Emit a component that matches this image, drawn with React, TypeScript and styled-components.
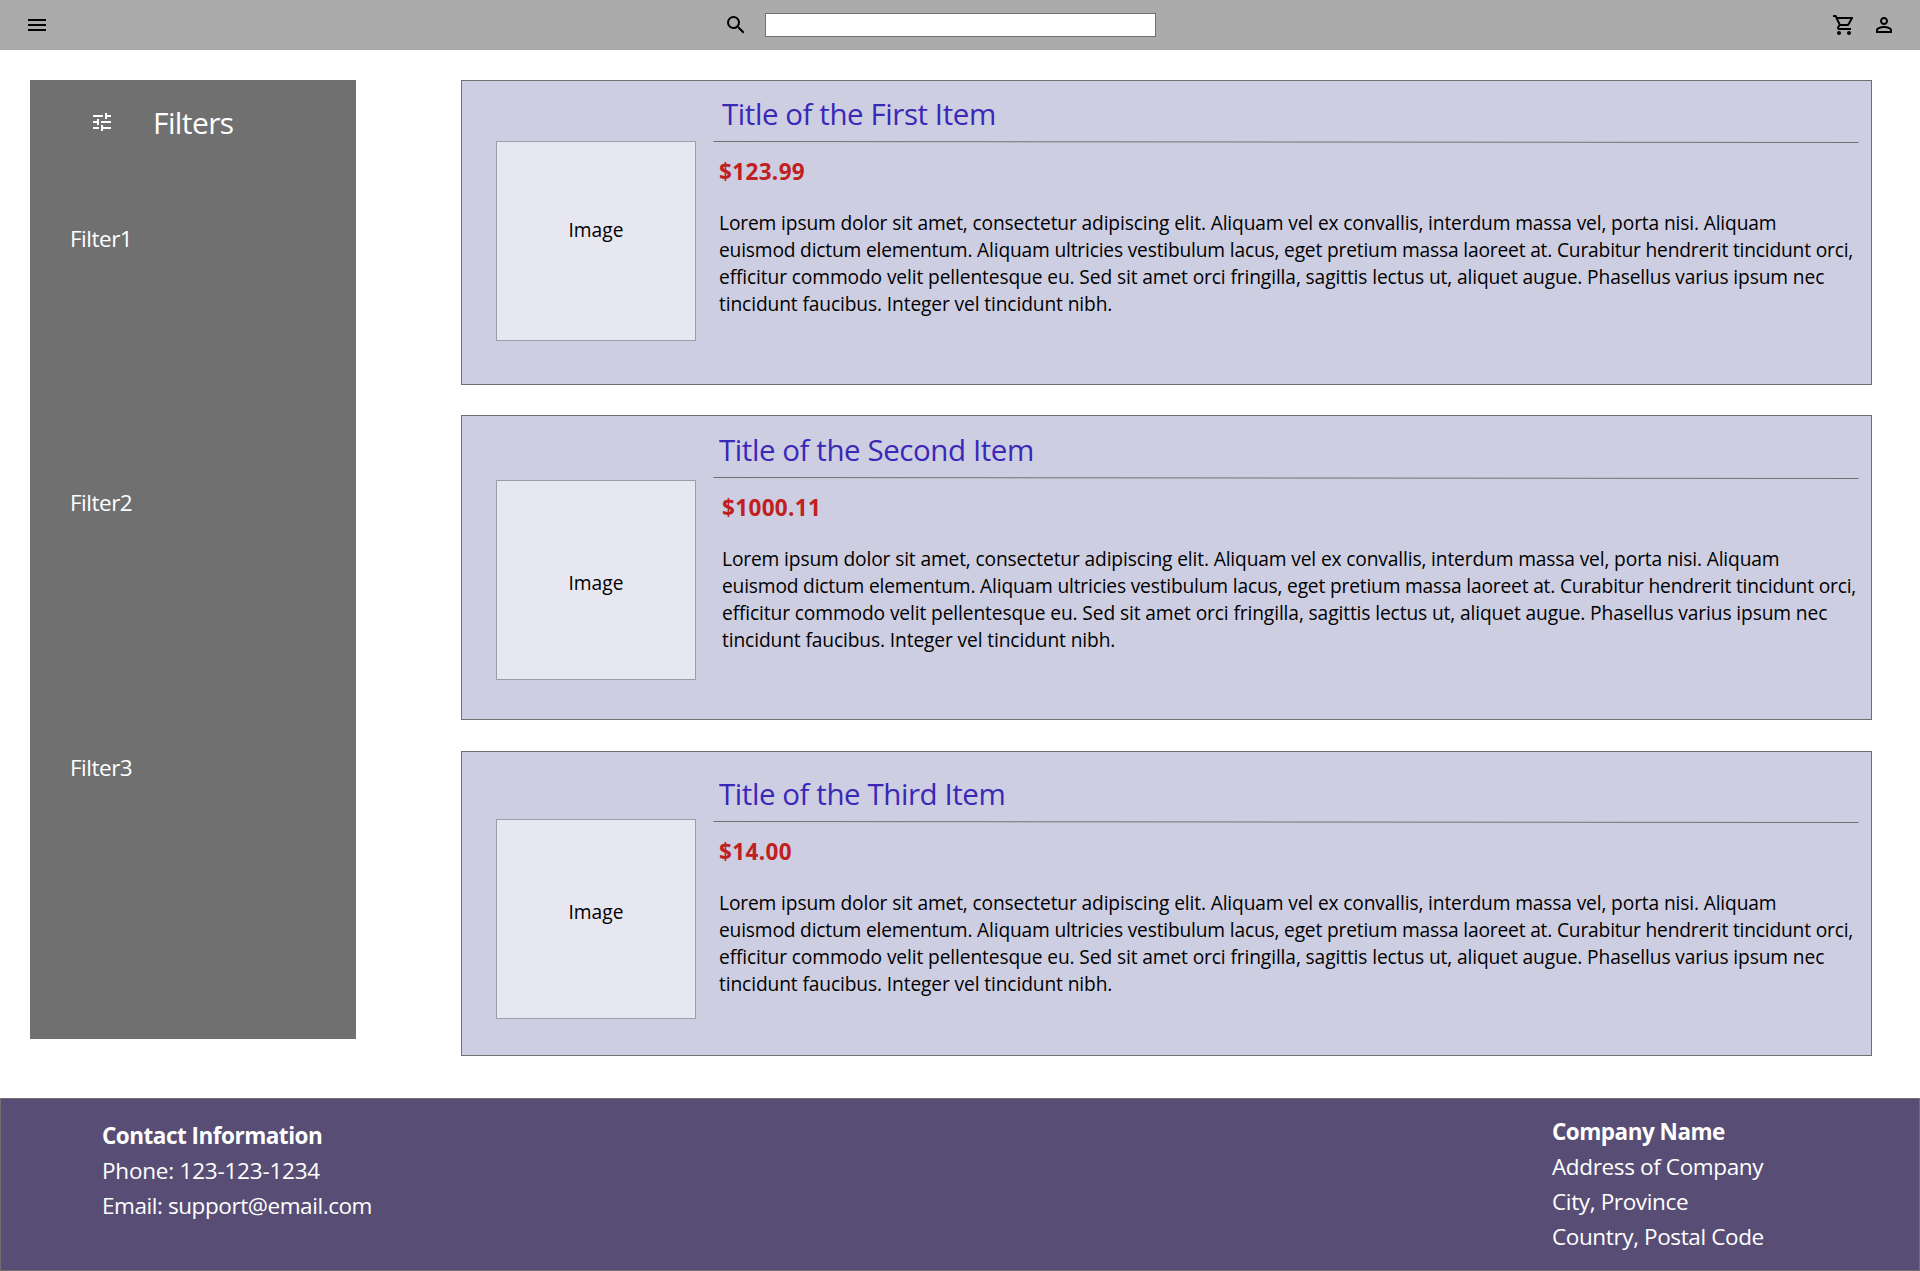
import React from "react";
import styled, { createGlobalStyle } from "styled-components";

const GlobalStyle = createGlobalStyle`
  *, *::before, *::after { box-sizing: border-box; }
  body {
    margin: 0;
    background: #fff;
    color: #000;
    font-family: "Open Sans", "Noto Sans", sans-serif;
  }
  h1, h2, h3, p, ul { margin: 0; padding: 0; font-weight: 400; }
`;

const Page = styled.div`
  display: flex;
  flex-direction: column;
  width: 1920px;
  height: 1271px;
  overflow: hidden;
`;

const TopBar = styled.header`
  display: grid;
  grid-template-columns: 724px 1fr auto;
  align-items: center;
  height: 50px;
  padding: 0 24px 0 0;
  background: #ababab;
`;

const MenuSlot = styled.div`
  display: flex;
  padding-left: 25px;
`;

const Search = styled.div`
  display: flex;
  align-items: center;
  gap: 17px;
`;

const SearchInput = styled.input`
  width: 391px;
  height: 24px;
  padding: 0 6px;
  border: 1px solid #707070;
  background: #fff;
  font: inherit;
  font-size: 15px;
  outline: none;
`;

const Actions = styled.div`
  display: flex;
  gap: 16px;
`;

const Icon = styled.svg`
  display: block;
  flex: none;
  width: 24px;
  height: 24px;
  fill: currentColor;
`;

const Main = styled.main`
  display: flex;
  align-items: flex-start;
  justify-content: space-between;
  height: 1048px;
  padding: 30px 48px 0 30px;
`;

const Sidebar = styled.aside`
  width: 326px;
  height: 959px;
  padding-top: 22px;
  background: #707070;
  color: #fff;
`;

const SidebarHeader = styled.div`
  display: flex;
  align-items: center;
  gap: 39px;
  height: 40px;
  padding-left: 60px;
`;

const SidebarTitle = styled.h2`
  padding-top: 1px;
  font-size: 30px;
  line-height: 40px;
  letter-spacing: -0.6px;
`;

const FilterList = styled.ul`
  display: flex;
  flex-direction: column;
  gap: 232.4px;
  padding: 81px 0 0 40px;
  list-style: none;
`;

const FilterItem = styled.li`
  font-size: 22.5px;
  line-height: 32px;
  letter-spacing: -0.5px;
`;

const Items = styled.section`
  display: flex;
  flex-direction: column;
  gap: 30px;
`;

const Card = styled.article<{ $gapAfter?: number }>`
  display: flex;
  align-items: flex-start;
  width: 1411px;
  height: 305px;
  margin-bottom: ${(p) => p.$gapAfter ?? 0}px;
  padding-left: 34px;
  border: 1px solid #707070;
  background: #cecee2;
`;

const Thumb = styled.div<{ $top: number; $labelTop: number }>`
  width: 200px;
  height: 200px;
  margin-top: ${(p) => p.$top}px;
  padding-top: ${(p) => p.$labelTop}px;
  border: 1px solid #9e9eaa;
  background: #e7e7f1;
  font-size: 19.2px;
  line-height: 28px;
  letter-spacing: 0;
  text-align: center;
`;

const Details = styled.div<{ $top: number }>`
  width: 1146px;
  margin-left: 17px;
  padding-top: ${(p) => p.$top}px;
`;

const ItemTitle = styled.h3<{ $indent: number }>`
  padding: 1px 0 0 ${(p) => p.$indent}px;
  color: #3a28b7;
  font-size: 29.5px;
  line-height: 40px;
  letter-spacing: -0.43px;
`;

const Rule = styled.svg`
  display: block;
  width: 1146px;
  height: 2px;
  margin-top: 7px;
`;

const Price = styled.p<{ $indent: number }>`
  margin-top: 13px;
  padding-left: ${(p) => p.$indent}px;
  color: #c02020;
  font-size: 22.5px;
  font-weight: 700;
  line-height: 32px;
  letter-spacing: 0.35px;
`;

const Description = styled.p<{ $indent: number }>`
  margin-top: 21px;
  padding-left: ${(p) => p.$indent}px;
  font-size: 19.2px;
  line-height: 27px;
  white-space: nowrap;
`;

const Line = styled.span<{ $tracking: number }>`
  display: block;
  letter-spacing: ${(p) => p.$tracking}px;
`;

const Footer = styled.footer`
  display: flex;
  justify-content: space-between;
  height: 173px;
  padding: 0 144px 0 101px;
  border: 1px solid #707070;
  background: #584e75;
  color: #fff;
`;

const FooterBlock = styled.address<{ $top: number; $width: number }>`
  width: ${(p) => p.$width}px;
  padding-top: ${(p) => p.$top}px;
  font-size: 22.5px;
  font-style: normal;
  line-height: 35px;
  white-space: nowrap;
`;

const FooterHeading = styled.h2`
  font-size: 22.5px;
  font-weight: 700;
  line-height: 35px;
  letter-spacing: -0.5px;
`;

const LOREM = [
  { text: "Lorem ipsum dolor sit amet, consectetur adipiscing elit. Aliquam vel ex convallis, interdum massa vel, porta nisi. Aliquam", tracking: -0.14 },
  { text: "euismod dictum elementum. Aliquam ultricies vestibulum lacus, eget pretium massa laoreet at. Curabitur hendrerit tincidunt orci,", tracking: -0.18 },
  { text: "efficitur commodo velit pellentesque eu. Sed sit amet orci fringilla, sagittis lectus ut, aliquet augue. Phasellus varius ipsum nec", tracking: -0.12 },
  { text: "tincidunt faucibus. Integer vel tincidunt nibh.", tracking: -0.12 },
];

const FILTERS = ["Filter1", "Filter2", "Filter3"];

const ITEMS = [
  { title: "Title of the First Item", price: "$123.99", top: 12, titleIndent: 9, textIndent: 6, thumbTop: 60, labelTop: 74, gapAfter: 0 },
  { title: "Title of the Second Item", price: "$1000.11", top: 13, titleIndent: 6, textIndent: 9, thumbTop: 64, labelTop: 88, gapAfter: 1 },
  { title: "Title of the Third Item", price: "$14.00", top: 21, titleIndent: 6, textIndent: 6, thumbTop: 67, labelTop: 78, gapAfter: 0 },
];

export default function App() {
  return (
    <>
      <GlobalStyle />
      <Page>
        <TopBar>
          <MenuSlot>
            <Icon viewBox="0 0 24 24">
              <path d="M3 18h18v-2H3v2zm0-5h18v-2H3v2zm0-7v2h18V6H3z" />
            </Icon>
          </MenuSlot>
          <Search>
            <Icon viewBox="0 0 24 24">
              <path d="M15.5 14h-.79l-.28-.27A6.471 6.471 0 0 0 16 9.5 6.5 6.5 0 1 0 9.5 16c1.61 0 3.09-.59 4.23-1.57l.27.28v.79l5 4.99L20.49 19l-4.99-5zm-6 0C7.01 14 5 11.99 5 9.5S7.01 5 9.5 5 14 7.01 14 9.5 11.99 14 9.5 14z" />
            </Icon>
            <SearchInput aria-label="Search" />
          </Search>
          <Actions>
            <Icon viewBox="0 0 24 24">
              <path d="M15.55 13c.75 0 1.41-.41 1.75-1.03l3.58-6.49A.996.996 0 0 0 20.01 4H5.21l-.94-2H1v2h2l3.6 7.59-1.35 2.44C4.52 15.37 5.48 17 7 17h12v-2H7l1.1-2h7.45zM6.16 6h12.15l-2.76 5H8.53L6.16 6zM7 18c-1.1 0-1.99.9-1.99 2S5.9 22 7 22s2-.9 2-2-.9-2-2-2zm10 0c-1.1 0-1.99.9-1.99 2s.89 2 1.99 2 2-.9 2-2-.9-2-2-2z" />
            </Icon>
            <Icon viewBox="0 0 24 24">
              <path d="M12 5.9a2.1 2.1 0 1 1 0 4.2 2.1 2.1 0 0 1 0-4.2m0 9c2.97 0 6.1 1.46 6.1 2.1v1.1H5.9V17c0-.64 3.13-2.1 6.1-2.1M12 4C9.79 4 8 5.79 8 8s1.79 4 4 4 4-1.79 4-4-1.79-4-4-4zm0 9c-2.67 0-8 1.34-8 4v3h16v-3c0-2.66-5.33-4-8-4z" />
            </Icon>
          </Actions>
        </TopBar>

        <Main>
          <Sidebar>
            <SidebarHeader>
              <Icon viewBox="0 0 24 24">
                <path d="M3 17v2h6v-2H3zM3 5v2h10V5H3zm10 16v-2h8v-2h-8v-2h-2v6h2zM7 9v2H3v2h4v2h2V9H7zm14 4v-2H11v2h10zm-6-4h2V7h4V5h-4V3h-2v6z" />
              </Icon>
              <SidebarTitle>Filters</SidebarTitle>
            </SidebarHeader>
            <FilterList>
              {FILTERS.map((name) => (
                <FilterItem key={name}>{name}</FilterItem>
              ))}
            </FilterList>
          </Sidebar>

          <Items>
            {ITEMS.map((item) => (
              <Card key={item.title} $gapAfter={item.gapAfter}>
                <Thumb $top={item.thumbTop} $labelTop={item.labelTop}>Image</Thumb>
                <Details $top={item.top}>
                  <ItemTitle $indent={item.titleIndent}>{item.title}</ItemTitle>
                  <Rule viewBox="0 0 1146 2">
                    <line x1="0.5" y1="0.5" x2="1145.5" y2="1.5" stroke="#707070" />
                  </Rule>
                  <Price $indent={item.textIndent}>{item.price}</Price>
                  <Description $indent={item.textIndent}>
                    {LOREM.map((line) => (
                      <Line key={line.text} $tracking={line.tracking}>{line.text}</Line>
                    ))}
                  </Description>
                </Details>
              </Card>
            ))}
          </Items>
        </Main>

        <Footer>
          <FooterBlock $top={19} $width={280}>
            <FooterHeading>Contact Information</FooterHeading>
            <Line $tracking={-0.22}>Phone: 123-123-1234</Line>
            <Line $tracking={-0.43}>Email: support@email.com</Line>
          </FooterBlock>
          <FooterBlock $top={15} $width={223}>
            <FooterHeading>Company Name</FooterHeading>
            <Line $tracking={-0.36}>Address of Company</Line>
            <Line $tracking={-0.36}>City, Province</Line>
            <Line $tracking={-0.38}>Country, Postal Code</Line>
          </FooterBlock>
        </Footer>
      </Page>
    </>
  );
}
